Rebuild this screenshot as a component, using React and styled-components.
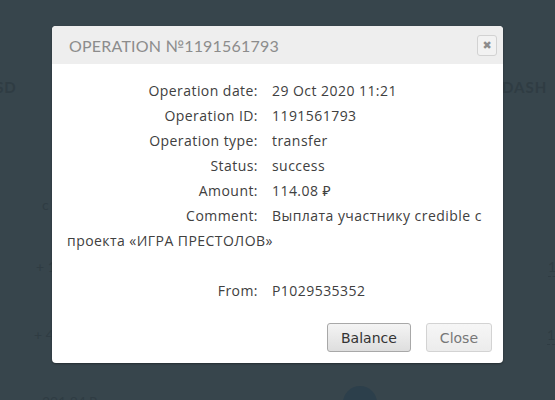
import React from "react";
import styled, { createGlobalStyle } from "styled-components";

const Global = createGlobalStyle`
  html, body { margin: 0; padding: 0; }
  body {
    width: 555px; height: 400px; overflow: hidden;
    background: #37454c;
    font-family: "Open Sans", "Noto Sans", sans-serif;
  }
`;

const Screen = styled.div`
  position: relative;
  width: 555px;
  height: 400px;
  overflow: hidden;
  background: #37454c;
`;

/* dimmed page behind the overlay */
const BackPage = styled.div`
  display: flex;
  flex-direction: column;
  width: 640px;
  margin-left: -17px;
  padding-top: 77px;
  color: #2f3c43;
  font-family: "Lato", "Open Sans", sans-serif;
`;

const BackRow = styled.div`
  display: grid;
  grid-template-columns: 519px 1fr;
  align-items: start;
  height: ${p => p.$h || 20}px;
  line-height: 20px;
  margin-top: ${p => p.$mt || 0}px;
  font-size: ${p => (p.$caps ? 15 : 14)}px;
  font-weight: ${p => (p.$caps ? 700 : 400)};
  letter-spacing: ${p => (p.$caps ? 1 : 0)}px;
`;

const BackCell = styled.div`
  padding-left: ${p => p.$pl || 0}px;
  white-space: nowrap;
`;

const BackNum = styled.span`
  border-bottom: 1px dashed #2f3c43;
  padding-bottom: 1px;
`;

const BottomCell = styled.div`
  display: flex;
  align-items: flex-start;
  gap: 245px;
  padding-left: ${p => p.$pl}px;
`;

const Circle = styled.div`
  width: 34px;
  height: 34px;
  margin-top: -6px;
  border-radius: 50%;
  background: #2c3f4b;
`;

const Modal = styled.div`
  position: absolute;
  left: 52px;
  top: 26px;
  width: 451px;
  background: #fff;
  border-radius: 4px;
  box-shadow: 0 1px 2px rgba(0,0,0,0.35);
  overflow: hidden;
`;

const Header = styled.div`
  display: flex;
  align-items: center;
  justify-content: space-between;
  height: 38px;
  padding: 0 6px 0 17px;
  background: #eeeeee;
`;

const Title = styled.h2`
  margin: 0;
  font-family: "Lato", "Open Sans", sans-serif;
  font-weight: 400;
  font-size: 16px;
  letter-spacing: 0.2px;
  color: #8c8c8c;
`;

const XButton = styled.button`
  width: 20px;
  height: 21px;
  padding: 0;
  border: 1px solid #d2d2d2;
  border-radius: 3px;
  background: #f2f2f2;
  color: #8c8c8c;
  font-size: 11px;
  line-height: 19px;
  font-family: "DejaVu Sans", sans-serif;
  display: flex;
  align-items: center;
  justify-content: center;
`;

const Body = styled.div`
  padding: 14px 16px 0 15px;
  font-size: 14px;
  letter-spacing: 0.45px;
  color: #404040;
`;

const Row = styled.div`
  line-height: 25px;
  min-height: 25px;
`;

const Label = styled.span`
  display: inline-block;
  width: 191px;
  margin-right: 14px;
  text-align: right;
`;

const Footer = styled.div`
  display: flex;
  justify-content: flex-end;
  gap: 15px;
  padding: 20px 11px 11px 0;
`;

const Btn = styled.button`
  height: 29px;
  padding: 0 13px;
  border-radius: 3px;
  font-family: "DejaVu Sans", "Open Sans", sans-serif;
  font-size: 14px;
  border: 1px solid ${p => (p.$muted ? "#d3d3d3" : "#a8a8a8")};
  color: ${p => (p.$muted ? "#777" : "#333")};
  background: ${p =>
    p.$muted
      ? "linear-gradient(#f6f6f6, #ececec)"
      : "linear-gradient(#f4f4f4, #dedede)"};
`;

const rows = [
  ["Operation date:", "29 Oct 2020 11:21"],
  ["Operation ID:", "1191561793"],
  ["Operation type:", "transfer"],
  ["Status:", "success"],
  ["Amount:", "114.08 ₽"],
  ["Comment:", "Выплата участнику credible с проекта «ИГРА ПРЕСТОЛОВ»"],
];

export default function App() {
  return (
    <Screen>
      <Global />
      <BackPage>
        <BackRow $caps $h={22}>
          <BackCell>USD</BackCell>
          <BackCell>DASH</BackCell>
        </BackRow>
        <BackRow $mt={96}>
          <BackCell $pl={59}>c</BackCell>
          <BackCell />
        </BackRow>
        <BackRow $mt={42}>
          <BackCell $pl={53}>+ 1</BackCell>
          <BackCell $pl={46}><BackNum>1 250</BackNum></BackCell>
        </BackRow>
        <BackRow $mt={48}>
          <BackCell $pl={51}>+ 4</BackCell>
          <BackCell $pl={45}><BackNum>11 400</BackNum></BackCell>
        </BackRow>
        <BackRow $mt={47}>
          <BottomCell $pl={59}>
            <span>391.84 ₽</span>
            <Circle />
          </BottomCell>
          <BackCell />
        </BackRow>
      </BackPage>

      <Modal>
        <Header>
          <Title>OPERATION №1191561793</Title>
          <XButton aria-label="close">✖</XButton>
        </Header>
        <Body>
          {rows.map(([l, v]) => (
            <Row key={l}>
              <Label>{l}</Label>
              {v}
            </Row>
          ))}
          <Row />
          <Row>
            <Label>From:</Label>
            P1029535352
          </Row>
        </Body>
        <Footer>
          <Btn>Balance</Btn>
          <Btn $muted>Close</Btn>
        </Footer>
      </Modal>
    </Screen>
  );
}
